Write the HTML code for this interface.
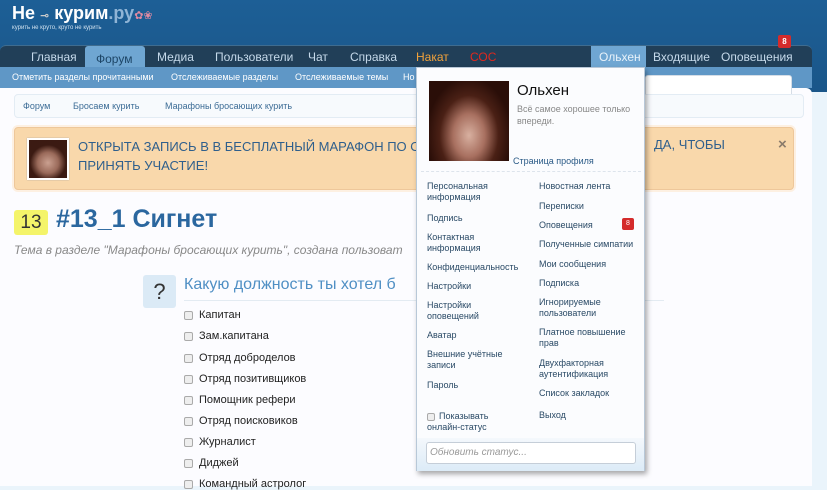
<!DOCTYPE html>
<html><head><meta charset="utf-8"><style>
*{margin:0;padding:0;box-sizing:border-box}
body{width:827px;height:486px;overflow:hidden;background:#eaf4fb;font-family:"Liberation Sans","DejaVu Sans",sans-serif;position:relative}
.a{position:absolute}
#hdr{left:0;top:0;width:827px;height:92px;background:linear-gradient(#1d5f96,#1a5689)}
#nav{left:0;top:45px;width:812px;height:23px;background:#213f58;border-radius:6px 6px 0 0;border-top:1px solid #3f6c8f}
#nav span{position:absolute;top:4px;font-size:12px;color:#c5d9ea}
#sub{left:0;top:67px;width:812px;height:21px;background:#5f97c6}
#sub span{position:absolute;top:5px;font-size:9px;color:#fff}
#page{left:0;top:88px;width:812px;height:398px;background:#fcfcff;border-radius:0 6px 0 0}
.crumb{left:14px;top:94px;width:790px;height:24px;border:1px solid #e3ecf4;border-radius:4px;background:#f7fafd}
.crumb span{position:absolute;top:6px;font-size:9px;color:#3c6c96}
#notice{left:14px;top:127px;width:780px;height:63px;background:#f9d8ab;border:1px solid #eec79a;border-radius:4px;box-shadow:0 0 0 2px #fdf0e2}
#notice .t{position:absolute;left:63px;top:9px;font-size:13px;line-height:19px;color:#2f5f8c}
.cb{display:inline-block;width:9px;height:9px;border:1px solid #aaa;border-radius:2px;background:#eee;vertical-align:middle;margin-right:6px}
.opt{position:absolute;left:184px;font-size:11px;color:#222}
#dd{left:416px;top:67px;width:229px;height:404px;background:#fbfcfe;border:1px solid #b8c8d8;box-shadow:2px 3px 5px rgba(0,0,0,.35)}
#dd span.l{position:absolute;font-size:9px;line-height:11px;color:#2a4a66}
</style></head><body>
<div class="a" id="hdr"></div>
<div class="a" style="left:12px;top:3px;font-size:18px;font-weight:bold;color:#fff;white-space:nowrap">Не <span style="font-size:11px;color:#ccc">⊸</span> курим<span style="color:#8fb4d6">.ру</span><span style="color:#e08aa2;font-size:11px">✿❀</span></div>
<div class="a" style="left:12px;top:25px;font-size:6px;color:#cfe0ee;white-space:nowrap">курить не круто, круто не курить</div>
<div class="a" id="nav">
<span style="left:31px">Главная</span>
<span style="left:85px;top:0;width:60px;height:23px;background:#6fa6d2;border-radius:3px 3px 0 0"></span>
<span style="left:96px;top:6px;color:#1d4566">Форум</span>
<span style="left:157px">Медиа</span>
<span style="left:215px">Пользователи</span>
<span style="left:308px">Чат</span>
<span style="left:350px">Справка</span>
<span style="left:416px;color:#f2a23a">Накат</span>
<span style="left:470px;color:#e0281e">СОС</span>
<span style="left:591px;top:0;width:55px;height:23px;background:#6fa6d2"></span>
<span style="left:599px;color:#e8f2fa">Ольхен</span>
<span style="left:653px">Входящие</span>
<span style="left:721px">Оповещения</span>
</div>
<div class="a" style="left:778px;top:35px;width:13px;height:13px;background:#d42b2b;border-radius:2px;color:#fff;font-size:8px;font-weight:bold;text-align:center;line-height:13px">8</div>
<div class="a" id="sub">
<span style="left:12px">Отметить разделы прочитанными</span>
<span style="left:171px">Отслеживаемые разделы</span>
<span style="left:295px">Отслеживаемые темы</span>
<span style="left:403px">Но</span>
</div>
<div class="a" id="page"></div>
<div class="a" style="left:645px;top:75px;width:147px;height:22px;background:#fff;border:1px solid #d5dde6;border-radius:3px"></div>
<div class="a crumb"><span style="left:8px">Форум</span><span style="left:58px">Бросаем курить</span><span style="left:150px">Марафоны бросающих курить</span></div>
<div class="a" id="notice">
<div style="position:absolute;left:12px;top:10px;width:42px;height:42px;background:radial-gradient(circle at 50% 60%,#caa090 0,#9a6a5a 35%,#3b1a12 60%);border:2px solid #fff;box-shadow:0 0 1px #999"></div>
<div class="t">ОТКРЫТА ЗАПИСЬ В В БЕСПЛАТНЫЙ МАРАФОН ПО О<br>ПРИНЯТЬ УЧАСТИЕ!</div>
<div style="position:absolute;left:639px;top:9px;font-size:13px;color:#2f5f8c">ДА, ЧТОБЫ</div>
<div style="position:absolute;left:763px;top:8px;font-size:15px;font-weight:bold;color:#8a7b6b">×</div>
</div>
<div class="a" style="left:14px;top:210px;width:34px;height:25px;background:#f4f46a;border-radius:3px;font-size:19px;color:#333;text-align:center;line-height:25px">13</div>
<div class="a" style="left:56px;top:205px;font-size:25px;font-weight:bold;color:#2b679f">#13_1 Сигнет</div>
<div class="a" style="left:14px;top:243px;font-size:12px;font-style:italic;color:#888">Тема в разделе "Марафоны бросающих курить", создана пользоват</div>
<div class="a" style="left:143px;top:275px;width:33px;height:33px;background:#dbeaf6;border-radius:3px;font-size:22px;color:#333;text-align:center;line-height:33px">?</div>
<div class="a" style="left:184px;top:276px;font-size:16px;color:#4f8fc4">Какую должность ты хотел б</div>
<div class="a" style="left:184px;top:300px;width:480px;height:1px;background:#e3ebf2"></div>
<div class="opt" style="top:309px"><span class="cb"></span>Капитан</div>
<div class="opt" style="top:330px"><span class="cb"></span>Зам.капитана</div>
<div class="opt" style="top:352px"><span class="cb"></span>Отряд доброделов</div>
<div class="opt" style="top:373px"><span class="cb"></span>Отряд позитивщиков</div>
<div class="opt" style="top:394px"><span class="cb"></span>Помощник рефери</div>
<div class="opt" style="top:415px"><span class="cb"></span>Отряд поисковиков</div>
<div class="opt" style="top:436px"><span class="cb"></span>Журналист</div>
<div class="opt" style="top:457px"><span class="cb"></span>Диджей</div>
<div class="opt" style="top:478px"><span class="cb"></span>Командный астролог</div>
<div class="a" id="dd">
<div style="position:absolute;left:12px;top:13px;width:80px;height:80px;background:radial-gradient(ellipse at 50% 68%,#d8b0a0 0,#a87060 28%,#4a2015 52%,#2a0e08 75%)"></div>
<div style="position:absolute;left:100px;top:14px;font-size:15px;color:#111">Ольхен</div>
<div style="position:absolute;left:100px;top:35px;font-size:9px;line-height:12px;color:#888">Всё самое хорошее только<br>впереди.</div>
<div style="position:absolute;left:96px;top:88px;font-size:9px;color:#2a5a86">Страница профиля</div>
<div style="position:absolute;left:4px;top:103px;width:220px;border-top:1px dashed #dde4ec"></div>
<span class="l" style="left:10px;top:113px">Персональная<br>информация</span>
<span class="l" style="left:10px;top:145px">Подпись</span>
<span class="l" style="left:10px;top:164px">Контактная<br>информация</span>
<span class="l" style="left:10px;top:194px">Конфиденциальность</span>
<span class="l" style="left:10px;top:213px">Настройки</span>
<span class="l" style="left:10px;top:232px">Настройки<br>оповещений</span>
<span class="l" style="left:10px;top:262px">Аватар</span>
<span class="l" style="left:10px;top:281px">Внешние учётные<br>записи</span>
<span class="l" style="left:10px;top:312px">Пароль</span>
<span class="l" style="left:10px;top:343px"><span class="cb" style="width:8px;height:8px;margin-right:4px"></span>Показывать<br>онлайн-статус</span>
<span class="l" style="left:122px;top:113px">Новостная лента</span>
<span class="l" style="left:122px;top:133px">Переписки</span>
<span class="l" style="left:122px;top:152px">Оповещения</span>
<span style="position:absolute;left:205px;top:150px;width:12px;height:12px;background:#d42b2b;border-radius:2px;color:#fff;font-size:7px;text-align:center;line-height:12px">8</span>
<span class="l" style="left:122px;top:171px">Полученные симпатии</span>
<span class="l" style="left:122px;top:191px">Мои сообщения</span>
<span class="l" style="left:122px;top:210px">Подписка</span>
<span class="l" style="left:122px;top:229px">Игнорируемые<br>пользователи</span>
<span class="l" style="left:122px;top:259px">Платное повышение<br>прав</span>
<span class="l" style="left:122px;top:290px">Двухфакторная<br>аутентификация</span>
<span class="l" style="left:122px;top:320px">Список закладок</span>
<span class="l" style="left:122px;top:342px">Выход</span>
<div style="position:absolute;left:0;top:370px;width:227px;height:33px;background:linear-gradient(#f4f8fc,#dcebf7)"></div>
<div style="position:absolute;left:9px;top:374px;width:210px;height:22px;background:#fff;border:1px solid #c5ced8;border-radius:3px;font-size:10px;font-style:italic;color:#999;padding:4px 3px">Обновить статус...</div>
</div>
</body></html>
